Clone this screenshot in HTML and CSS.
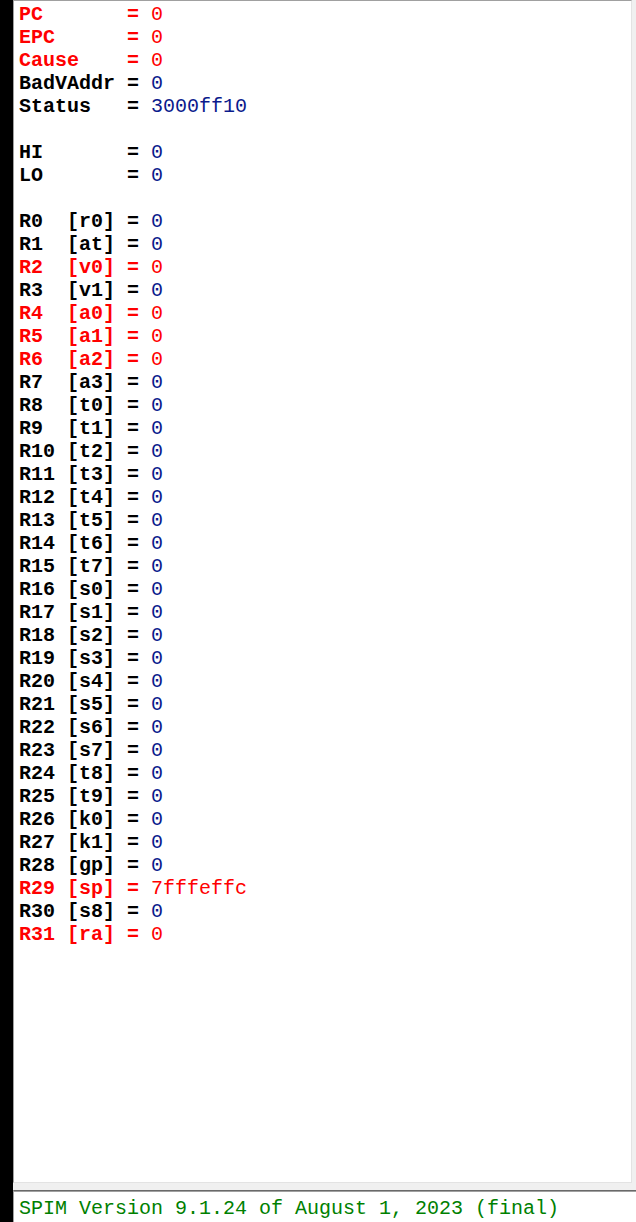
FILE: index.html
```html
<!DOCTYPE html>
<html>
<head>
<meta charset="utf-8">
<link rel="stylesheet" href="styles.css">
</head>
<body>
<div class="app">
  <div class="sidebar"></div>
  <div class="main">
    <div class="regs">
      <div class="line red"><span class="lbl">PC      </span><span class="eq"> = </span><span class="val">0</span></div>
      <div class="line red"><span class="lbl">EPC     </span><span class="eq"> = </span><span class="val">0</span></div>
      <div class="line red"><span class="lbl">Cause   </span><span class="eq"> = </span><span class="val">0</span></div>
      <div class="line"><span class="lbl">BadVAddr</span><span class="eq"> = </span><span class="val">0</span></div>
      <div class="line"><span class="lbl">Status  </span><span class="eq"> = </span><span class="val">3000ff10</span></div>
      <div class="line blank"></div>
      <div class="line"><span class="lbl">HI      </span><span class="eq"> = </span><span class="val">0</span></div>
      <div class="line"><span class="lbl">LO      </span><span class="eq"> = </span><span class="val">0</span></div>
      <div class="line blank"></div>
      <div class="line"><span class="lbl">R0  [r0]</span><span class="eq"> = </span><span class="val">0</span></div>
      <div class="line"><span class="lbl">R1  [at]</span><span class="eq"> = </span><span class="val">0</span></div>
      <div class="line red"><span class="lbl">R2  [v0]</span><span class="eq"> = </span><span class="val">0</span></div>
      <div class="line"><span class="lbl">R3  [v1]</span><span class="eq"> = </span><span class="val">0</span></div>
      <div class="line red"><span class="lbl">R4  [a0]</span><span class="eq"> = </span><span class="val">0</span></div>
      <div class="line red"><span class="lbl">R5  [a1]</span><span class="eq"> = </span><span class="val">0</span></div>
      <div class="line red"><span class="lbl">R6  [a2]</span><span class="eq"> = </span><span class="val">0</span></div>
      <div class="line"><span class="lbl">R7  [a3]</span><span class="eq"> = </span><span class="val">0</span></div>
      <div class="line"><span class="lbl">R8  [t0]</span><span class="eq"> = </span><span class="val">0</span></div>
      <div class="line"><span class="lbl">R9  [t1]</span><span class="eq"> = </span><span class="val">0</span></div>
      <div class="line"><span class="lbl">R10 [t2]</span><span class="eq"> = </span><span class="val">0</span></div>
      <div class="line"><span class="lbl">R11 [t3]</span><span class="eq"> = </span><span class="val">0</span></div>
      <div class="line"><span class="lbl">R12 [t4]</span><span class="eq"> = </span><span class="val">0</span></div>
      <div class="line"><span class="lbl">R13 [t5]</span><span class="eq"> = </span><span class="val">0</span></div>
      <div class="line"><span class="lbl">R14 [t6]</span><span class="eq"> = </span><span class="val">0</span></div>
      <div class="line"><span class="lbl">R15 [t7]</span><span class="eq"> = </span><span class="val">0</span></div>
      <div class="line"><span class="lbl">R16 [s0]</span><span class="eq"> = </span><span class="val">0</span></div>
      <div class="line"><span class="lbl">R17 [s1]</span><span class="eq"> = </span><span class="val">0</span></div>
      <div class="line"><span class="lbl">R18 [s2]</span><span class="eq"> = </span><span class="val">0</span></div>
      <div class="line"><span class="lbl">R19 [s3]</span><span class="eq"> = </span><span class="val">0</span></div>
      <div class="line"><span class="lbl">R20 [s4]</span><span class="eq"> = </span><span class="val">0</span></div>
      <div class="line"><span class="lbl">R21 [s5]</span><span class="eq"> = </span><span class="val">0</span></div>
      <div class="line"><span class="lbl">R22 [s6]</span><span class="eq"> = </span><span class="val">0</span></div>
      <div class="line"><span class="lbl">R23 [s7]</span><span class="eq"> = </span><span class="val">0</span></div>
      <div class="line"><span class="lbl">R24 [t8]</span><span class="eq"> = </span><span class="val">0</span></div>
      <div class="line"><span class="lbl">R25 [t9]</span><span class="eq"> = </span><span class="val">0</span></div>
      <div class="line"><span class="lbl">R26 [k0]</span><span class="eq"> = </span><span class="val">0</span></div>
      <div class="line"><span class="lbl">R27 [k1]</span><span class="eq"> = </span><span class="val">0</span></div>
      <div class="line"><span class="lbl">R28 [gp]</span><span class="eq"> = </span><span class="val">0</span></div>
      <div class="line red"><span class="lbl">R29 [sp]</span><span class="eq"> = </span><span class="val">7fffeffc</span></div>
      <div class="line"><span class="lbl">R30 [s8]</span><span class="eq"> = </span><span class="val">0</span></div>
      <div class="line red"><span class="lbl">R31 [ra]</span><span class="eq"> = </span><span class="val">0</span></div>
    </div>
    <div class="console">
      <div class="line msg">SPIM Version 9.1.24 of August 1, 2023 (final)</div>
    </div>
  </div>
</div>
</body>
</html>
```
FILE: styles.css
```css
html, body {
  margin: 0;
  padding: 0;
  background: #f0f0f0;
}
.app {
  display: flex;
  width: 636px;
  height: 1222px;
  overflow: hidden;
}
.sidebar {
  width: 13px;
  flex: none;
  background: #000;
}
.main {
  flex: 1;
  display: flex;
  flex-direction: column;
  gap: 7px;
}
.regs {
  flex: none;
  background: #fff;
  border-top: 1px solid #a0a0a0;
  border-left: 1px solid #a0a0a0;
  border-right: 1px solid #e3e3e3;
  border-bottom: 1px solid #e3e3e3;
  margin-right: 4px;
  padding: 2px 0 0 5px;
  box-sizing: border-box;
  height: 1183px;
  font-family: "Liberation Mono", "Courier New", monospace;
  font-size: 20px;
}
.line {
  height: 23px;
  line-height: 23px;
  white-space: pre;
  color: #000;
}
.lbl, .eq {
  font-weight: bold;
}
.val {
  color: #0a1a8c;
}
.red, .red .val {
  color: #ff0000;
}
.console {
  flex: 1;
  background: #fff;
  border-top: 1px solid #696969;
  border-left: 1px solid #a0a0a0;
  box-shadow: inset 0 1px 0 #a0a0a0;
  padding: 6px 0 0 5px;
  font-family: "Liberation Mono", "Courier New", monospace;
  font-size: 20px;
}
.msg {
  color: #008000;
}
```
